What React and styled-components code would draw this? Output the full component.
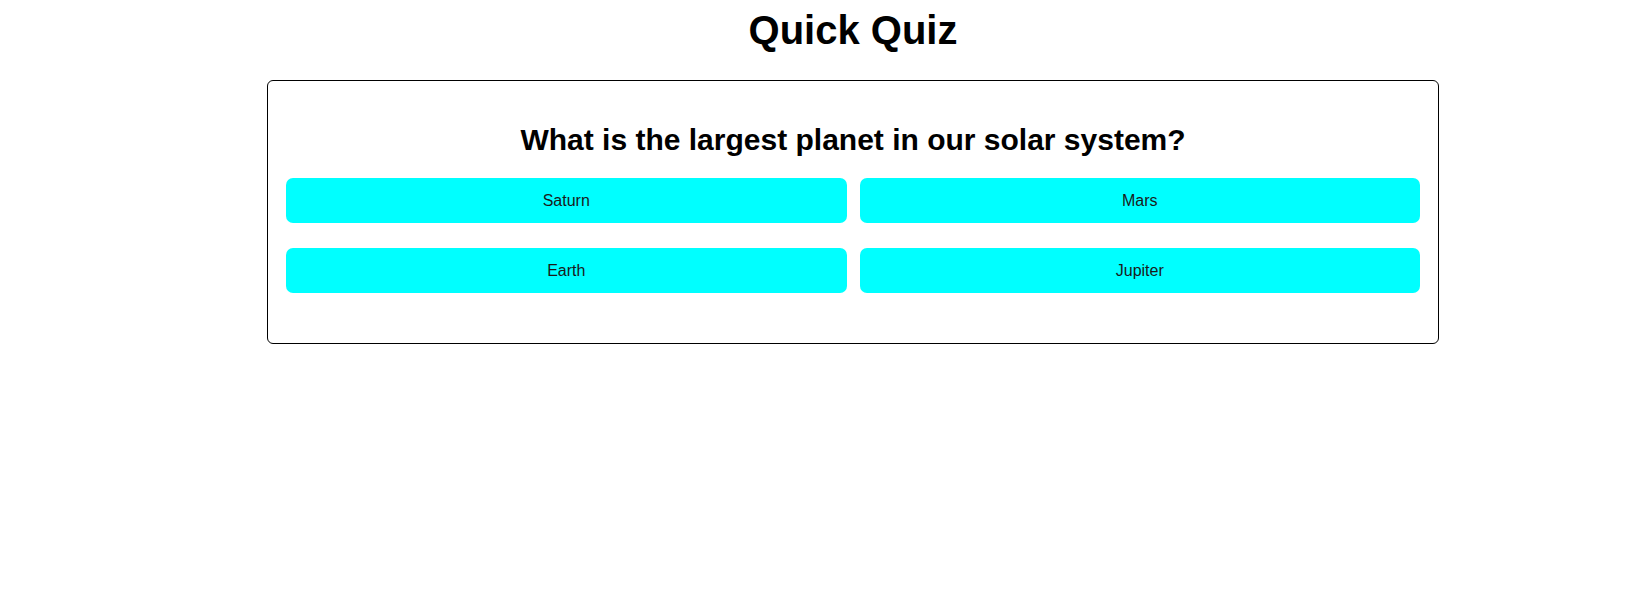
import React from 'react'
import styled, { createGlobalStyle } from 'styled-components'

const GlobalStyle = createGlobalStyle`
body {
  margin: 0;
  background: #fff;
  font-family: "Liberation Sans", Arial, sans-serif;
  color: #000;
}
`

const Page = styled.div`
display: flex;
flex-direction: column;
align-items: center;
padding: 7px 0 0 58px;
`

const Title = styled.h1`
margin: 0;
font-size: 40px;
line-height: 46px;
font-weight: 700;
`

const Card = styled.div`
box-sizing: border-box;
width: 1172px;
margin-top: 27px;
padding: 21px 18px 50px;
border: 1px solid #000;
border-radius: 6px;
`

const Question = styled.h2`
margin: 21px 0 21px;
font-size: 30px;
line-height: 34px;
font-weight: 700;
text-align: center;
`

const Options = styled.div`
display: grid;
grid-template-columns: 1fr 1fr;
column-gap: 13px;
row-gap: 25px;
`

const Option = styled.button`
height: 45px;
border: none;
border-radius: 7px;
background-color: #00ffff;
color: #1a1a1a;
font-family: "Liberation Sans", Arial, sans-serif;
font-size: 16px;
cursor: pointer;
`

const options = ['Saturn', 'Mars', 'Earth', 'Jupiter']

const App = () => {
  return (
    <Page>
      <GlobalStyle />
      <Title>Quick Quiz</Title>
      <Card>
        <Question>What is the largest planet in our solar system?</Question>
        <Options>
          {options.map(o => (
            <Option key={o}>{o}</Option>
          ))}
        </Options>
      </Card>
    </Page>
  )
}

export default App
